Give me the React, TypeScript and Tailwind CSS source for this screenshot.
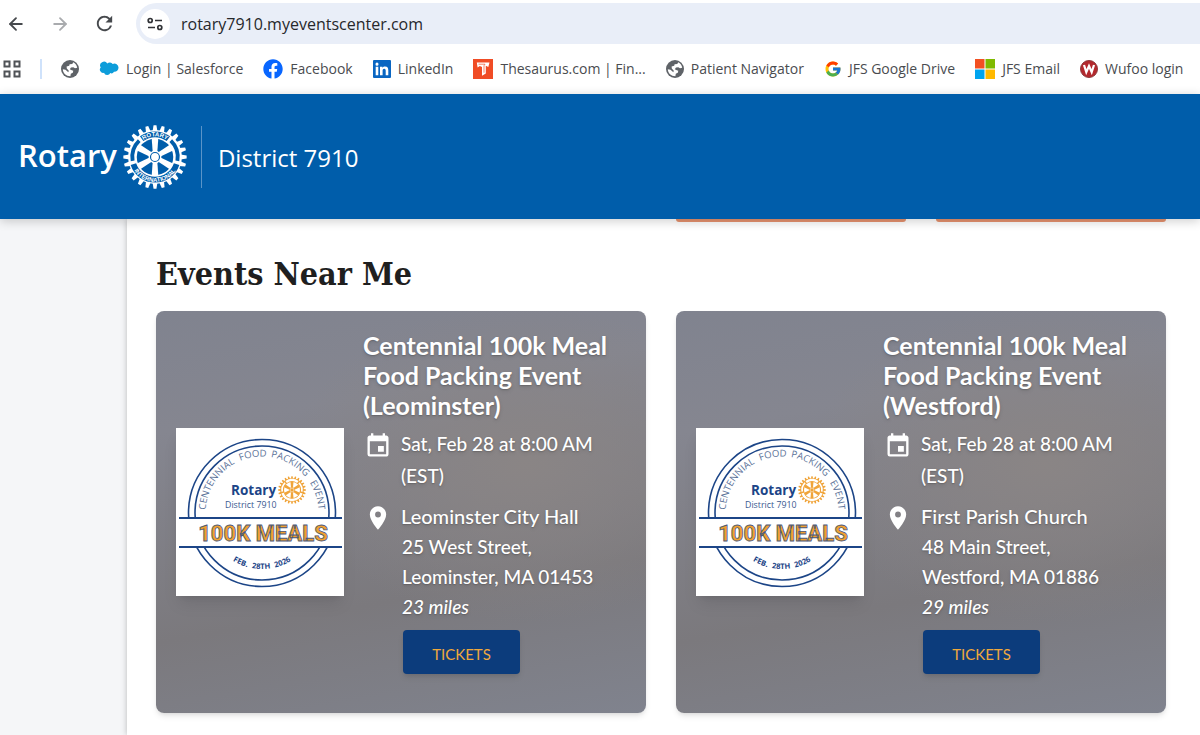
import { useId } from 'react';
import { ArrowLeft, ArrowRight } from 'lucide-react';
import { FaFacebook } from 'react-icons/fa';
import { MdEvent, MdLocationOn, MdRefresh } from 'react-icons/md';
import { FcGoogle } from 'react-icons/fc';

function polar(r: number, deg: number) {
  const a = (deg * Math.PI) / 180;
  return `${(50 + r * Math.sin(a)).toFixed(2)} ${(50 - r * Math.cos(a)).toFixed(2)}`;
}

function RotaryWheel({ color, gap, className, lettered = false }: { color: string; gap: string; className?: string; lettered?: boolean }) {
  const id = useId();
  const teeth = Array.from({ length: 24 }, (_, i) => i * 15);
  const spokes = Array.from({ length: 6 }, (_, i) => i * 60);
  return (
    <svg viewBox="0 0 100 100" className={className} aria-hidden="true">
      {teeth.map((d) => (
        <path key={d} fill={color} d={`M${polar(40, d - 5.5)} L${polar(49.5, d - 2.6)} L${polar(49.5, d + 2.6)} L${polar(40, d + 5.5)}Z`} />
      ))}
      <circle cx="50" cy="50" r="42" fill={color} />
      <path d={`M${polar(35.5, -36)} A35.5 35.5 0 0 1 ${polar(35.5, 36)}`} fill="none" stroke={gap} strokeWidth="9" />
      <path d={`M${polar(35.5, 108)} A35.5 35.5 0 0 1 ${polar(35.5, 252)}`} fill="none" stroke={gap} strokeWidth="9" />
      <path d={`M${polar(35.5, 44)} A35.5 35.5 0 0 1 ${polar(35.5, 100)}`} fill="none" stroke={gap} strokeWidth="6" />
      <path d={`M${polar(35.5, 260)} A35.5 35.5 0 0 1 ${polar(35.5, 316)}`} fill="none" stroke={gap} strokeWidth="6" />
      <circle cx="50" cy="50" r="28.5" fill={gap} />
      {spokes.map((d) => (
        <path key={d} fill={color} d={`M${polar(7, d - 30)} L${polar(30, d - 10)} L${polar(30, d + 10)} L${polar(7, d + 30)}Z`} />
      ))}
      <circle cx="50" cy="50" r="10" fill={color} />
      <circle cx="50" cy="50" r="7" fill="none" stroke={gap} strokeWidth="1.8" />
      {lettered && (
        <g fill={color} className="font-['Liberation_Sans'] font-bold" fontSize="9.5" textAnchor="middle">
          <path id={`${id}t`} d={`M${polar(32.2, -70)} A32.2 32.2 0 0 1 ${polar(32.2, 70)}`} fill="none" />
          <path id={`${id}b`} d={`M${polar(38.9, 265)} A38.9 38.9 0 0 0 ${polar(38.9, 95)}`} fill="none" />
          <text><textPath href={`#${id}t`} startOffset="50%">ROTARY</textPath></text>
          <text><textPath href={`#${id}b`} startOffset="50%">INTERNATIONAL</textPath></text>
        </g>
      )}
    </svg>
  );
}

function MealsBadge() {
  const id = useId();
  return (
    <svg viewBox="0 0 168 168" className="w-[168px] shrink-0 bg-white shadow-lg text-shadow-none" role="img" aria-label="100K Meals">
      <g fill="none" stroke="#1c4587" strokeWidth="1.6">
        <circle cx="86" cy="85" r="73.5" />
        <circle cx="86" cy="85" r="67" />
      </g>
      <rect x="3" y="90" width="163" height="29" fill="#fff" />
      <path d="M3 90H166M3 119H166" stroke="#1c4587" strokeWidth="2" />
      <path id={`${id}a`} d="M29.5 85 A56.5 56.5 0 0 1 142.5 85" fill="none" />
      <path id={`${id}f`} d="M30 85 A56 56 0 0 0 142 85" fill="none" />
      <g className="font-['Open_Sans']" fontSize="9.6" fill="#5c7399" textAnchor="middle">
        <text><textPath href={`#${id}a`} startOffset="18%">CENTENNIAL</textPath></text>
        <text><textPath href={`#${id}a`} startOffset="45%">FOOD</textPath></text>
        <text><textPath href={`#${id}a`} startOffset="66.5%">PACKING</textPath></text>
        <text><textPath href={`#${id}a`} startOffset="90%">EVENT</textPath></text>
      </g>
      <text x="55" y="67" className="font-['Open_Sans'] font-bold" fontSize="13.5" fill="#1c4587">Rotary</text>
      <text x="49" y="80" className="font-['Open_Sans']" fontSize="8.8" fill="#3a5a90">District 7910</text>
      <svg x="102" y="48" width="28" height="28" viewBox="0 0 28 28">
        <RotaryWheel color="#f0a43a" gap="#fff" />
      </svg>
      <text x="87" y="113" textAnchor="middle" className="font-['Roboto'] font-extrabold" fontSize="22" fill="#f0a030" stroke="#4b5878" strokeWidth="0.8">100K MEALS</text>
      <g className="font-['Open_Sans'] font-bold" fontSize="7.6" fill="#1c4587" textAnchor="middle">
        <text><textPath href={`#${id}f`} startOffset="37%">FEB.</textPath></text>
        <text><textPath href={`#${id}f`} startOffset="49.5%">28TH</textPath></text>
        <text><textPath href={`#${id}f`} startOffset="62.5%">2026</textPath></text>
      </g>
    </svg>
  );
}

const icons = {
  salesforce: (
    <svg viewBox="0 0 20 20" className="size-5"><path fill="#0d9dda" d="M8.3 4.6A3.6 3.6 0 0 1 13.700 5 4 4 0 0 1 19.500 8.700 4 4 0 0 1 15 12.800 3 3 0 0 1 11.300 14.100 3.400 3.400 0 0 1 5 13.700 3.200 3.200 0 0 1 1.700 8.500 3.700 3.700 0 0 1 8.300 4.600Z" /></svg>
  ),
  facebook: <FaFacebook className="size-5 text-[#0866ff]" />,
  linkedin: (
    <svg viewBox="0 0 18 18" className="size-[18px]"><rect width="18" height="18" rx="1" fill="#0a66c2" /><path fill="#fff" d="M2.700 6.800h2.600v8.400H2.700zM4 2.600a1.500 1.500 0 1 1 0 3.050 1.500 1.500 0 0 1 0-3.050M7 6.800h2.500V8c.5-.9 1.400-1.400 2.600-1.400 2.500 0 3.200 1.600 3.200 3.900v4.700h-2.600v-4.200c0-1.200-.2-2.200-1.500-2.200s-1.600 1-1.600 2.200v4.200H7z" /></svg>
  ),
  thesaurus: (
    <svg viewBox="0 0 20 20" className="size-5"><rect width="20" height="20" fill="#f04c25" /><path fill="#fff" d="M3.800 3.500H16.500L15.300 8 12.800 6.800V14.500L9 16.800V8L6.800 7 4.600 8.600z" /><path fill="none" stroke="#f04c25" strokeWidth=".7" d="M5.500 5.200h6.500l-1 1.500v7" /></svg>
  ),
  globe: (
    <svg viewBox="0 0 18 18" className="size-[18px]"><circle cx="9" cy="9" r="9" fill="#5f6368" /><path fill="#fff" d="M12.200 2.300C14.500 3.500 15.800 5.300 16.200 7.800L14 8.300 12.300 7.300 10 7.600 8.800 9.200 10.800 10.300 12.300 10.700 11.800 12.800 9.800 13.800 9.400 16.300C5 16.300 2 13.200 1.800 9.300L4.500 9.700 7.300 12.300 7.800 10.800 5.800 8.500 5.600 6.500 8.200 5.800 8.600 4.300 11.300 4z" /></svg>
  ),
  google: <FcGoogle className="size-[18px]" />,
  microsoft: (
    <svg viewBox="0 0 20 20" className="size-5"><path fill="#f25022" d="M0 0h9.500v9.500H0z" /><path fill="#7fba00" d="M10.500 0H20v9.500h-9.500z" /><path fill="#00a4ef" d="M0 10.500h9.500V20H0z" /><path fill="#ffb900" d="M10.500 10.500H20V20h-9.500z" /></svg>
  ),
  wufoo: (
    <svg viewBox="0 0 18 18" className="size-[18px]"><circle cx="9" cy="9" r="8.500" fill="#b3282d" stroke="#8e3a3c" /><path d="M4 5 6.300 12.200 9 6 11.700 12.200 14 5" fill="none" stroke="#fff" strokeWidth="2.200" /></svg>
  ),
};

const bookmarks: { icon: keyof typeof icons; label: string }[] = [
  { icon: 'salesforce', label: 'Login | Salesforce' },
  { icon: 'facebook', label: 'Facebook' },
  { icon: 'linkedin', label: 'LinkedIn' },
  { icon: 'thesaurus', label: 'Thesaurus.com | Fin...' },
  { icon: 'globe', label: 'Patient Navigator' },
  { icon: 'google', label: 'JFS Google Drive' },
  { icon: 'microsoft', label: 'JFS Email' },
  { icon: 'wufoo', label: 'Wufoo login' },
];

function BrowserBar() {
  return (
    <div className="bg-white font-['Open_Sans',sans-serif]">
      <div className="flex items-center pt-[3px] text-[#46494d]">
        <button aria-label="Back" className="ml-1 flex w-6 justify-center"><ArrowLeft className="size-5" strokeWidth={2.2} /></button>
        <button aria-label="Forward" className="ml-5 flex w-6 justify-center text-[#a9abae]"><ArrowRight className="size-5" strokeWidth={2.2} /></button>
        <button aria-label="Reload" className="ml-5 flex w-6 justify-center"><MdRefresh className="size-[23px]" /></button>
        <div className="ml-5 flex h-[41px] flex-1 items-center gap-[11px] rounded-l-full bg-[#e9eef8] pl-1">
          <button aria-label="Site information" className="flex size-[30px] items-center justify-center rounded-full bg-white">
            <svg viewBox="0 0 16 14" className="w-4" fill="none" stroke="#303236" strokeWidth="1.7"><circle cx="3.2" cy="3.5" r="2" /><path d="M8 3.500h7M1 10.500h7" /><circle cx="12.8" cy="10.5" r="2" /></svg>
          </button>
          <input aria-label="Address" defaultValue="rotary7910.myeventscenter.com" className="min-w-0 flex-1 bg-transparent text-base text-[#26282b] outline-none" />
        </div>
      </div>
      <nav aria-label="Bookmarks" className="flex h-[50px] items-center overflow-hidden whitespace-nowrap text-sm text-[#4a4c50]">
        <button aria-label="Tab groups" className="ml-[3px]">
          <svg viewBox="0 0 18 18" className="size-[18px]" fill="none" stroke="#505357" strokeWidth="2"><path d="M1.500 1.500h5v5h-5zM11.500 1.500h5v5h-5zM1.500 11.500h5v5h-5zM11.500 11.500h5v5h-5z" /></svg>
        </button>
        <span className="ml-[19px] h-5 w-[2px] bg-[#cfe2fb]" />
        <a href="#site" aria-label="Site" className="ml-[19px]">{icons.globe}</a>
        <div className="ml-5 flex flex-1 items-center gap-5">
          {bookmarks.map((b) => (
            <a key={b.label} href="#bookmark" className="flex items-center gap-[7px]">{icons[b.icon]}<span>{b.label}</span></a>
          ))}
        </div>
      </nav>
    </div>
  );
}

const events = [
  { city: 'Leominster', place: 'Leominster City Hall', street: '25 West Street,', town: 'Leominster, MA 01453', distance: '23 miles' },
  { city: 'Westford', place: 'First Parish Church', street: '48 Main Street,', town: 'Westford, MA 01886', distance: '29 miles' },
];

function EventCard({ event }: { event: (typeof events)[number] }) {
  return (
    <article className="flex items-center gap-[19px] rounded-lg bg-[radial-gradient(ellipse_at_75%_38%,#8a8585_0%,#86858b00_45%),linear-gradient(170deg,#80838f_0%,#858690_25%,#7b797d_68%,#80838e_100%)] px-5 pt-[19px] pb-[39px] text-[19px] font-medium text-white shadow-md text-shadow-md">
      <div className="-mb-5"><MealsBadge /></div>
      <div className="min-w-0 flex-1">
        <h2 className="text-[25px] leading-[30px] font-bold">{`Centennial 100k Meal Food Packing Event (${event.city})`}</h2>
        <div className="mt-2 flex gap-2 leading-8">
          <MdEvent className="mt-1 w-[30px] shrink-0 text-[28px]" />
          <p>Sat, Feb 28 at 8:00 AM (EST)</p>
        </div>
        <div className="mt-2 flex gap-2 text-xl leading-8">
          <MdLocationOn className="mt-1 w-[30px] shrink-0 text-[28px]" />
          <p className="leading-8">{event.place}</p>
        </div>
        <address className="pl-[39px] leading-[30px] not-italic">
          {event.street}<br />{event.town}<br /><em>{event.distance}</em>
        </address>
        <button className="mt-2 ml-10 h-11 w-[117px] rounded bg-[#0c3c7c] pt-1 text-[15px] font-normal text-[#efa93c] shadow-md text-shadow-none">TICKETS</button>
      </div>
    </article>
  );
}

export default function App() {
  return (
    <div className="flex min-h-screen flex-col overflow-hidden bg-[#f5f6f8] font-['Lato',sans-serif]">
      <BrowserBar />
      <header className="relative z-10 flex h-[125px] items-center bg-[#005daa] pl-[18px] font-['Open_Sans',sans-serif] text-white shadow-[0_2px_10px_rgba(0,0,0,0.2)]">
        <span className="pb-1 text-[31px] leading-10 font-semibold">Rotary</span>
        <RotaryWheel color="#fff" gap="#005daa" lettered className="ml-[6px] size-16" />
        <span className="ml-[14px] h-[62px] w-px bg-[#5a94c8]" />
        <span className="ml-4 pt-[3px] text-2xl">District 7910</span>
      </header>
      <main className="ml-[127px] flex-1 bg-white pr-[34px] pb-5 pl-[29px] shadow-[0_0_6px_rgba(0,0,0,0.25)]">
        <div className="grid grid-cols-4 gap-[30px]">
          <div className="col-start-3 h-[3px] rounded-b bg-[#e6926e] shadow-md" />
          <div className="h-[3px] rounded-b bg-[#e6926e] shadow-md" />
        </div>
        <h1 className="mt-[30px] mb-[15px] font-['DejaVu_Serif_Condensed','DejaVu_Serif',serif] text-[32px] leading-[44px] font-bold text-[#1f1f1f]">Events Near Me</h1>
        <div className="grid grid-cols-2 gap-[30px]">
          {events.map((e) => <EventCard key={e.city} event={e} />)}
        </div>
      </main>
    </div>
  );
}
